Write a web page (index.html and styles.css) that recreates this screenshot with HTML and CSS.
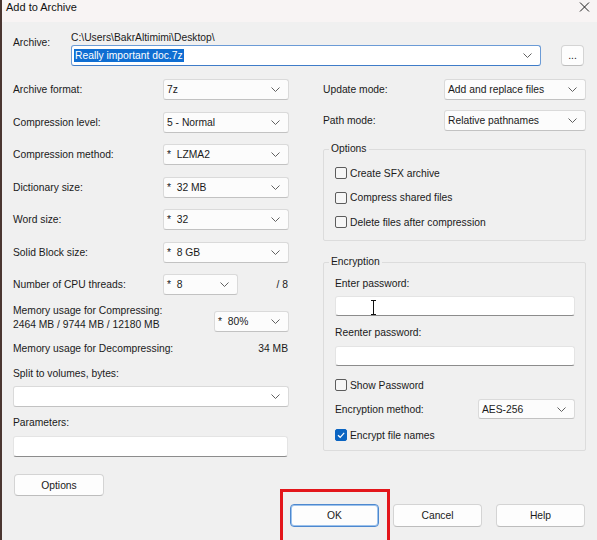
FILE: index.html
```html
<!DOCTYPE html>
<html lang="en">
<head>
    <meta charset="UTF-8">
    <title>Add to Archive</title>
    <link rel="stylesheet" href="styles.css">
</head>
<body>
    <div class="window">
        <div class="titlebar">
            <span class="title">Add to Archive</span>
            <svg class="close" width="12" height="10" viewBox="0 0 12 10"><path d="M1 0.5 L10 9.5 M10 0.5 L1 9.5" stroke="#1e1e1e" stroke-width="1" fill="none"/></svg>
        </div>

        <div class="content">
            <div class="archive-row">
                <div class="archive-label">Archive:</div>
                <div class="archive-main">
                    <div class="path">C:\Users\BakrAltimimi\Desktop\</div>
                    <div class="select focused">
                        <span class="highlight">Really important doc.7z</span>
                        <svg class="chev" width="9" height="5" viewBox="0 0 9 5"><path d="M0.5 0.5 L4.5 4.5 L8.5 0.5" stroke="#606060" fill="none"/></svg>
                    </div>
                </div>
                <button class="btn browse">...</button>
            </div>

            <div class="columns">
                <div class="left">
                    <div class="field">
                        <span>Archive format:</span>
                        <div class="select wide"><span>7z</span><svg class="chev" width="9" height="5" viewBox="0 0 9 5"><path d="M0.5 0.5 L4.5 4.5 L8.5 0.5" stroke="#606060" fill="none"/></svg></div>
                    </div>
                    <div class="field">
                        <span>Compression level:</span>
                        <div class="select wide"><span>5 - Normal</span><svg class="chev" width="9" height="5" viewBox="0 0 9 5"><path d="M0.5 0.5 L4.5 4.5 L8.5 0.5" stroke="#606060" fill="none"/></svg></div>
                    </div>
                    <div class="field">
                        <span>Compression method:</span>
                        <div class="select wide"><span>*&nbsp; LZMA2</span><svg class="chev" width="9" height="5" viewBox="0 0 9 5"><path d="M0.5 0.5 L4.5 4.5 L8.5 0.5" stroke="#606060" fill="none"/></svg></div>
                    </div>
                    <div class="field">
                        <span>Dictionary size:</span>
                        <div class="select wide"><span>*&nbsp; 32 MB</span><svg class="chev" width="9" height="5" viewBox="0 0 9 5"><path d="M0.5 0.5 L4.5 4.5 L8.5 0.5" stroke="#606060" fill="none"/></svg></div>
                    </div>
                    <div class="field">
                        <span>Word size:</span>
                        <div class="select wide"><span>*&nbsp; 32</span><svg class="chev" width="9" height="5" viewBox="0 0 9 5"><path d="M0.5 0.5 L4.5 4.5 L8.5 0.5" stroke="#606060" fill="none"/></svg></div>
                    </div>
                    <div class="field">
                        <span>Solid Block size:</span>
                        <div class="select wide"><span>*&nbsp; 8 GB</span><svg class="chev" width="9" height="5" viewBox="0 0 9 5"><path d="M0.5 0.5 L4.5 4.5 L8.5 0.5" stroke="#606060" fill="none"/></svg></div>
                    </div>
                    <div class="field">
                        <span class="cpu-label">Number of CPU threads:</span>
                        <div class="select small"><span>*&nbsp; 8</span><svg class="chev" width="9" height="5" viewBox="0 0 9 5"><path d="M0.5 0.5 L4.5 4.5 L8.5 0.5" stroke="#606060" fill="none"/></svg></div>
                        <span class="cpu-max">/ 8</span>
                    </div>

                    <div class="memory-row">
                        <div class="memory-label">Memory usage for Compressing:<br>2464 MB / 9744 MB / 12180 MB</div>
                        <div class="select small"><span>*&nbsp; 80%</span><svg class="chev" width="9" height="5" viewBox="0 0 9 5"><path d="M0.5 0.5 L4.5 4.5 L8.5 0.5" stroke="#606060" fill="none"/></svg></div>
                    </div>
                    <div class="decompress-row">
                        <span>Memory usage for Decompressing:</span>
                        <span>34 MB</span>
                    </div>

                    <div class="split-label">Split to volumes, bytes:</div>
                    <div class="select full"><span></span><svg class="chev" width="9" height="5" viewBox="0 0 9 5"><path d="M0.5 0.5 L4.5 4.5 L8.5 0.5" stroke="#606060" fill="none"/></svg></div>

                    <div class="params-label">Parameters:</div>
                    <div class="input params"></div>

                    <button class="btn options-btn">Options</button>
                </div>

                <div class="right">
                    <div class="field">
                        <span>Update mode:</span>
                        <div class="select mode"><span>Add and replace files</span><svg class="chev" width="9" height="5" viewBox="0 0 9 5"><path d="M0.5 0.5 L4.5 4.5 L8.5 0.5" stroke="#606060" fill="none"/></svg></div>
                    </div>
                    <div class="field path-mode">
                        <span>Path mode:</span>
                        <div class="select mode"><span>Relative pathnames</span><svg class="chev" width="9" height="5" viewBox="0 0 9 5"><path d="M0.5 0.5 L4.5 4.5 L8.5 0.5" stroke="#606060" fill="none"/></svg></div>
                    </div>

                    <fieldset class="group options-group">
                        <legend>Options</legend>
                        <label class="check-row"><span class="check"></span>Create SFX archive</label>
                        <label class="check-row"><span class="check"></span>Compress shared files</label>
                        <label class="check-row"><span class="check"></span>Delete files after compression</label>
                    </fieldset>

                    <fieldset class="group encryption-group">
                        <legend>Encryption</legend>
                        <div class="enc-label">Enter password:</div>
                        <div class="input pass">
                            <svg class="ibeam" width="7" height="15" viewBox="0 0 7 15"><path d="M1 0.5 H6 M3.5 0.5 V14.5 M1 14.5 H6" stroke="#111" stroke-width="1" fill="none"/></svg>
                        </div>
                        <div class="enc-label second">Reenter password:</div>
                        <div class="input pass"></div>
                        <label class="check-row show-pass"><span class="check"></span>Show Password</label>
                        <div class="method-row">
                            <span>Encryption method:</span>
                            <div class="select method"><span>AES-256</span><svg class="chev" width="9" height="5" viewBox="0 0 9 5"><path d="M0.5 0.5 L4.5 4.5 L8.5 0.5" stroke="#606060" fill="none"/></svg></div>
                        </div>
                        <label class="check-row encrypt-names"><span class="check checked"><svg width="10" height="10" viewBox="0 0 10 10"><path d="M2 5.2 L4.2 7.3 L8.2 2.8" stroke="#fff" stroke-width="1.2" fill="none"/></svg></span>Encrypt file names</label>
                    </fieldset>
                </div>
            </div>

            <div class="footer">
                <button class="btn action default">OK</button>
                <button class="btn action">Cancel</button>
                <button class="btn action">Help</button>
            </div>
        </div>

        <div class="highlight-box"></div>
    </div>
</body>
</html>
```

FILE: styles.css
```css
body {
    margin: 0;
    background-color: #f0f0f0;
    font-family: 'Liberation Sans', Arial, sans-serif;
    font-size: 10.3px;
    color: #1a1a1a;
}

.window {
    position: relative;
    width: 597px;
    height: 540px;
    box-sizing: border-box;
    border-left: 2px solid #4a3631;
    background-color: #f0f0f0;
    overflow: hidden;
}

.titlebar {
    height: 22px;
    background-color: #f8f4f4;
    display: flex;
    justify-content: space-between;
    padding: 0 6px 0 4px;
}

.title {
    font-size: 11px;
    line-height: 15px;
    color: #111;
}

.close {
    margin-top: 2px;
}

.content {
    padding: 0 11px;
}

/* archive name row */
.archive-row {
    display: flex;
    margin-top: 9px;
}

.archive-label {
    width: 58px;
    padding-top: 5px;
    line-height: 14px;
}

.archive-main {
    width: 470px;
}

.path {
    line-height: 13px;
    margin-bottom: 1px;
}

.select {
    display: flex;
    align-items: center;
    justify-content: space-between;
    height: 21px;
    box-sizing: border-box;
    border: 1px solid #dadada;
    border-bottom-color: #c2c2c2;
    border-radius: 3px;
    background-color: #fcfcfc;
    padding: 0 8px 0 3px;
    white-space: nowrap;
}

.select.focused {
    border-color: #6b9bd6;
    border-bottom-color: #3f7cc8;
    background-color: #fff;
    padding-left: 2px;
}

.highlight {
    background-color: #0f6ed2;
    color: #fff;
    line-height: 13px;
    padding: 0 1px;
}

.chev {
    flex-shrink: 0;
}

.btn {
    font-family: inherit;
    font-size: 10.3px;
    color: #1a1a1a;
    background-color: #fdfdfd;
    border: 1px solid #d4d4d4;
    border-bottom-color: #bdbdbd;
    border-radius: 4px;
    padding: 0;
    cursor: pointer;
}

.browse {
    width: 23px;
    height: 21px;
    margin-left: 20px;
    align-self: flex-end;
    line-height: 10px;
}

/* two columns */
.columns {
    display: flex;
    gap: 34px;
    margin-top: 13px;
}

.left {
    width: 276px;
}

.right {
    width: 263px;
}

.field {
    display: flex;
    align-items: center;
    justify-content: space-between;
    height: 21px;
    margin-bottom: 11.5px;
}

.select.wide {
    width: 126px;
}

.select.small {
    width: 75px;
}

.cpu-label {
    width: 150px;
}

.cpu-max {
    flex: 1;
    text-align: right;
    padding-right: 1px;
}

.memory-row {
    display: flex;
    justify-content: space-between;
    align-items: flex-end;
    height: 28px;
    margin-top: -2.5px;
}

.memory-label {
    line-height: 14px;
}

.decompress-row {
    display: flex;
    justify-content: space-between;
    line-height: 14px;
    margin-top: 10px;
    padding-right: 1px;
}

.split-label {
    line-height: 14px;
    margin-top: 11px;
    margin-bottom: 5px;
}

.select.full {
    width: 100%;
    background-color: #fff;
}

.params-label {
    line-height: 14px;
    margin-top: 9px;
    margin-bottom: 6px;
}

.input {
    height: 21px;
    box-sizing: border-box;
    background-color: #fff;
    border: 1px solid #e4e4e4;
    border-bottom-color: #8c8c8c;
    border-radius: 3px;
}

.input.params {
    width: 275px;
}

.options-btn {
    width: 90px;
    height: 22px;
    margin-top: 17px;
    margin-left: 1px;
}

/* right column */
.select.mode {
    width: 142px;
}

.path-mode {
    margin-top: -2px;
}

.group {
    margin: 0;
    border: 1px solid #dcdcdc;
    border-radius: 2px;
    padding: 9px 10px 10px 11px;
}

.group legend {
    margin-left: -6px;
    padding: 0 2px;
    line-height: 14px;
}

.options-group {
    margin-top: 0;
}

.check-row {
    display: flex;
    align-items: center;
    height: 16px;
    margin-bottom: 8.5px;
}

.check-row:last-child {
    margin-bottom: 0;
}

.check {
    display: flex;
    align-items: center;
    justify-content: center;
    width: 12px;
    height: 12px;
    box-sizing: border-box;
    border: 1px solid #5c5c5c;
    border-radius: 2px;
    background-color: #f6f6f6;
    margin-right: 3px;
}

.check.checked {
    background-color: #0a64c2;
    border-color: #0a64c2;
}

.encryption-group {
    margin-top: 14px;
    padding-top: 8px;
    padding-bottom: 7px;
}

.enc-label {
    line-height: 14px;
    margin-bottom: 5px;
}

.enc-label.second {
    margin-top: 10px;
    margin-bottom: 6px;
}

.input.pass {
    position: relative;
    width: 240px;
    height: 20px;
}

.ibeam {
    position: absolute;
    left: 34px;
    top: 3px;
}

.show-pass {
    margin-top: 11px;
    margin-bottom: 6px;
}

.method-row {
    display: flex;
    align-items: center;
    justify-content: space-between;
    width: 240px;
    height: 20px;
}

.select.method {
    width: 97px;
    height: 20px;
}

.encrypt-names {
    margin-top: 8px;
}

/* bottom buttons */
.footer {
    display: flex;
    justify-content: flex-end;
    gap: 14px;
    margin-top: 8px;
    padding-right: 1px;
}

.action {
    width: 89px;
    height: 23px;
}

.action.default {
    border-color: #4d88cf;
    box-shadow: inset 0 0 0 1px #9cc2ec;
}

.highlight-box {
    position: absolute;
    left: 278px;
    top: 489px;
    width: 110px;
    height: 60px;
    box-sizing: border-box;
    border: 3px solid #e3161b;
}
```
